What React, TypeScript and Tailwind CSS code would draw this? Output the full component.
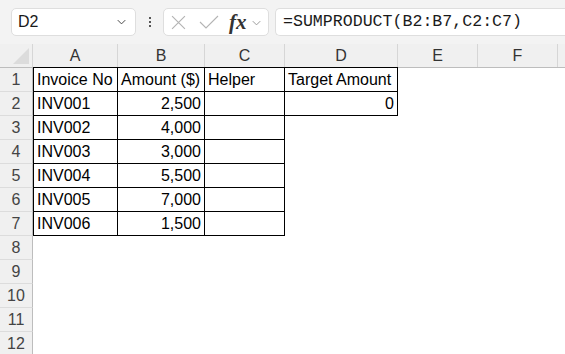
import React from 'react';

const cols = [
  { key: 'A', w: 85 },
  { key: 'B', w: 87 },
  { key: 'C', w: 80 },
  { key: 'D', w: 113 },
  { key: 'E', w: 80 },
  { key: 'F', w: 80 },
];

type Cell = { v?: string; right?: boolean; boxed?: boolean };

const rows: Cell[][] = [
  [{ v: 'Invoice No', boxed: true }, { v: 'Amount ($)', boxed: true }, { v: 'Helper', boxed: true }, { v: 'Target Amount', boxed: true }, {}, {}],
  [{ v: 'INV001', boxed: true }, { v: '2,500', right: true, boxed: true }, { boxed: true }, { v: '0', right: true, boxed: true }, {}, {}],
  [{ v: 'INV002', boxed: true }, { v: '4,000', right: true, boxed: true }, { boxed: true }, {}, {}, {}],
  [{ v: 'INV003', boxed: true }, { v: '3,000', right: true, boxed: true }, { boxed: true }, {}, {}, {}],
  [{ v: 'INV004', boxed: true }, { v: '5,500', right: true, boxed: true }, { boxed: true }, {}, {}, {}],
  [{ v: 'INV005', boxed: true }, { v: '7,000', right: true, boxed: true }, { boxed: true }, {}, {}, {}],
  [{ v: 'INV006', boxed: true }, { v: '1,500', right: true, boxed: true }, { boxed: true }, {}, {}, {}],
];

const Chevron = ({ className }: { className?: string }) => (
  <svg viewBox="0 0 12 8" className={className} fill="none" stroke="currentColor" strokeWidth="1.3">
    <path d="M1 1.5 L6 6.5 L11 1.5" />
  </svg>
);

const Toolbar = () => (
  <div className="flex h-[44px] items-start bg-[#f3f3f3] pt-[8px]">
    <div className="ml-[11px] flex h-[28px] w-[125px] items-center justify-between rounded-[5px] border border-[#dedede] bg-white pl-[6px] pr-[8px]">
      <span className="text-[16px] text-[#1a1a1a]">D2</span>
      <Chevron className="h-[6px] w-[11px] text-[#444]" />
    </div>
    <div className="flex h-[28px] w-[27px] flex-col items-center justify-center gap-[2px]">
      <span className="h-[2px] w-[2px] bg-[#555]" />
      <span className="h-[2px] w-[2px] bg-[#555]" />
      <span className="h-[2px] w-[2px] bg-[#555]" />
    </div>
    <div className="flex h-[28px] w-[106px] items-center rounded-[5px] border border-[#dedede] bg-white pl-[7px]">
      <svg viewBox="0 0 14 14" className="h-[15px] w-[15px] text-[#b4b4b4]" fill="none" stroke="currentColor" strokeWidth="1.1">
        <path d="M1 1 L13 13 M13 1 L1 13" />
      </svg>
      <svg viewBox="0 0 20 14" className="ml-[13px] h-[14px] w-[20px] text-[#b4b4b4]" fill="none" stroke="currentColor" strokeWidth="1.1">
        <path d="M1 7 L7 13 L19 1" />
      </svg>
      <span className="ml-[10px] font-['Liberation_Serif',serif] text-[21px] font-bold italic leading-none text-[#333]">fx</span>
      <Chevron className="ml-[4px] mt-[2px] h-[6px] w-[11px] text-[#999]" />
    </div>
    <div className="ml-[6px] flex h-[28px] flex-1 items-center rounded-l-[5px] border border-r-0 border-[#dedede] bg-white pl-[7px]">
      <span className="font-['Liberation_Mono',monospace] text-[16.6px] text-[#1a1a1a]">=SUMPRODUCT(B2:B7,C2:C7)</span>
    </div>
  </div>
);

const HeaderRow = () => (
  <div className="flex h-[24px] border-b border-[#bdbdbd] bg-[#f0f0f0]">
    <div className="relative w-[33px] shrink-0 border-r border-[#d6d6d6]">
      <svg viewBox="0 0 10 10" className="absolute bottom-[3px] right-[3px] h-[16px] w-[16px]">
        <path d="M10 0 L10 10 L0 10 Z" fill="#dcdcdc" />
      </svg>
    </div>
    {cols.map((c) => (
      <div key={c.key} style={{ width: c.w }} className="flex shrink-0 items-center justify-center border-r border-[#d6d6d6] text-[16px] text-[#333]">
        {c.key}
      </div>
    ))}
    <div className="flex-1" />
  </div>
);

const App: React.FC = () => {
  const empty = [8, 9, 10, 11, 12];
  return (
    <div className="h-[354px] w-[565px] overflow-hidden bg-white font-['Liberation_Sans',Arial,sans-serif]">
      <Toolbar />
      <HeaderRow />
      {rows.map((r, i) => (
        <div key={i} className="flex h-[24px]">
          <div className="flex w-[33px] shrink-0 items-center justify-center border-b border-r border-b-[#dcdcdc] border-r-[#bdbdbd] bg-[#f0f0f0] text-[16px] text-[#444]">
            {i + 1}
          </div>
          {r.map((c, j) => (
            <div
              key={j}
              style={{ width: cols[j].w }}
              className={[
                'flex shrink-0 items-center overflow-visible whitespace-nowrap px-[3px] text-[16px] text-black',
                c.right ? 'justify-end' : 'justify-start',
                c.boxed ? 'border-b border-r border-black' : '',
                c.boxed && i === 0 ? 'border-t' : '',
                c.boxed && j === 0 ? 'border-l' : '',
                i === 0 && c.boxed ? '-mt-px h-[25px]' : '',
              ].join(' ')}
            >
              {c.v}
            </div>
          ))}
        </div>
      ))}
      {empty.map((n) => (
        <div key={n} className="flex h-[24px]">
          <div className="flex w-[33px] shrink-0 items-center justify-center border-b border-r border-b-[#dcdcdc] border-r-[#bdbdbd] bg-[#f0f0f0] text-[16px] text-[#444]">
            {n}
          </div>
        </div>
      ))}
    </div>
  );
};

export default App;
